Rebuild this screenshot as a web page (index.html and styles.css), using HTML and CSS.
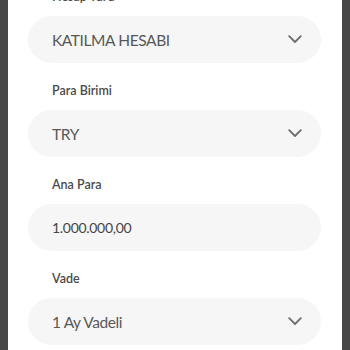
FILE: index.html
```
<!DOCTYPE html>
<html lang="tr">
<head>
<meta charset="utf-8">
<link rel="stylesheet" href="styles.css">
</head>
<body>
<div class="frame">
  <div class="panel">
    <div class="label first">Hesap Türü</div>
    <div class="field select"><span class="value">KATILMA HESABI</span><svg class="chev" viewBox="0 0 14 9" width="14" height="9"><path d="M1.2 1.2 L7 7 L12.8 1.2" fill="none" stroke="#707070" stroke-width="1.9" stroke-linecap="round" stroke-linejoin="round"/></svg></div>
    <div class="label">Para Birimi</div>
    <div class="field select"><span class="value">TRY</span><svg class="chev" viewBox="0 0 14 9" width="14" height="9"><path d="M1.2 1.2 L7 7 L12.8 1.2" fill="none" stroke="#707070" stroke-width="1.9" stroke-linecap="round" stroke-linejoin="round"/></svg></div>
    <div class="label">Ana Para</div>
    <div class="field"><span class="value small">1.000.000,00</span></div>
    <div class="label">Vade</div>
    <div class="field select"><span class="value">1 Ay Vadeli</span><svg class="chev" viewBox="0 0 14 9" width="14" height="9"><path d="M1.2 1.2 L7 7 L12.8 1.2" fill="none" stroke="#707070" stroke-width="1.9" stroke-linecap="round" stroke-linejoin="round"/></svg></div>
  </div>
</div>
</body>
</html>
```
FILE: styles.css
```
html, body { margin: 0; padding: 0; }
body { background: #474747; font-family: "Lato", "Liberation Sans", sans-serif; }
.frame { width: 350px; height: 350px; overflow: hidden; padding: 0 8px; box-sizing: border-box; }
.panel { background: #fff; height: 380px; margin-top: -11px; padding: 0 21px 0 20px; display: flex; flex-direction: column; }
.label { font-size: 12.5px; font-weight: 600; color: #4a4a4a; padding-left: 24px; height: 16px; line-height: 16px; margin: 20px 0 11px; }
.label.first { margin-top: 0; }
.field { height: 47px; border-radius: 24px; background: #f6f6f6; display: flex; align-items: center; padding: 0 19px 0 24px; flex-shrink: 0; }
.value { font-size: 15.5px; color: #585858; flex: 1; letter-spacing: -0.4px; line-height: 20px; }
.value.small { font-size: 14px; color: #454545; letter-spacing: -0.3px; }
.chev { display: block; }
```
